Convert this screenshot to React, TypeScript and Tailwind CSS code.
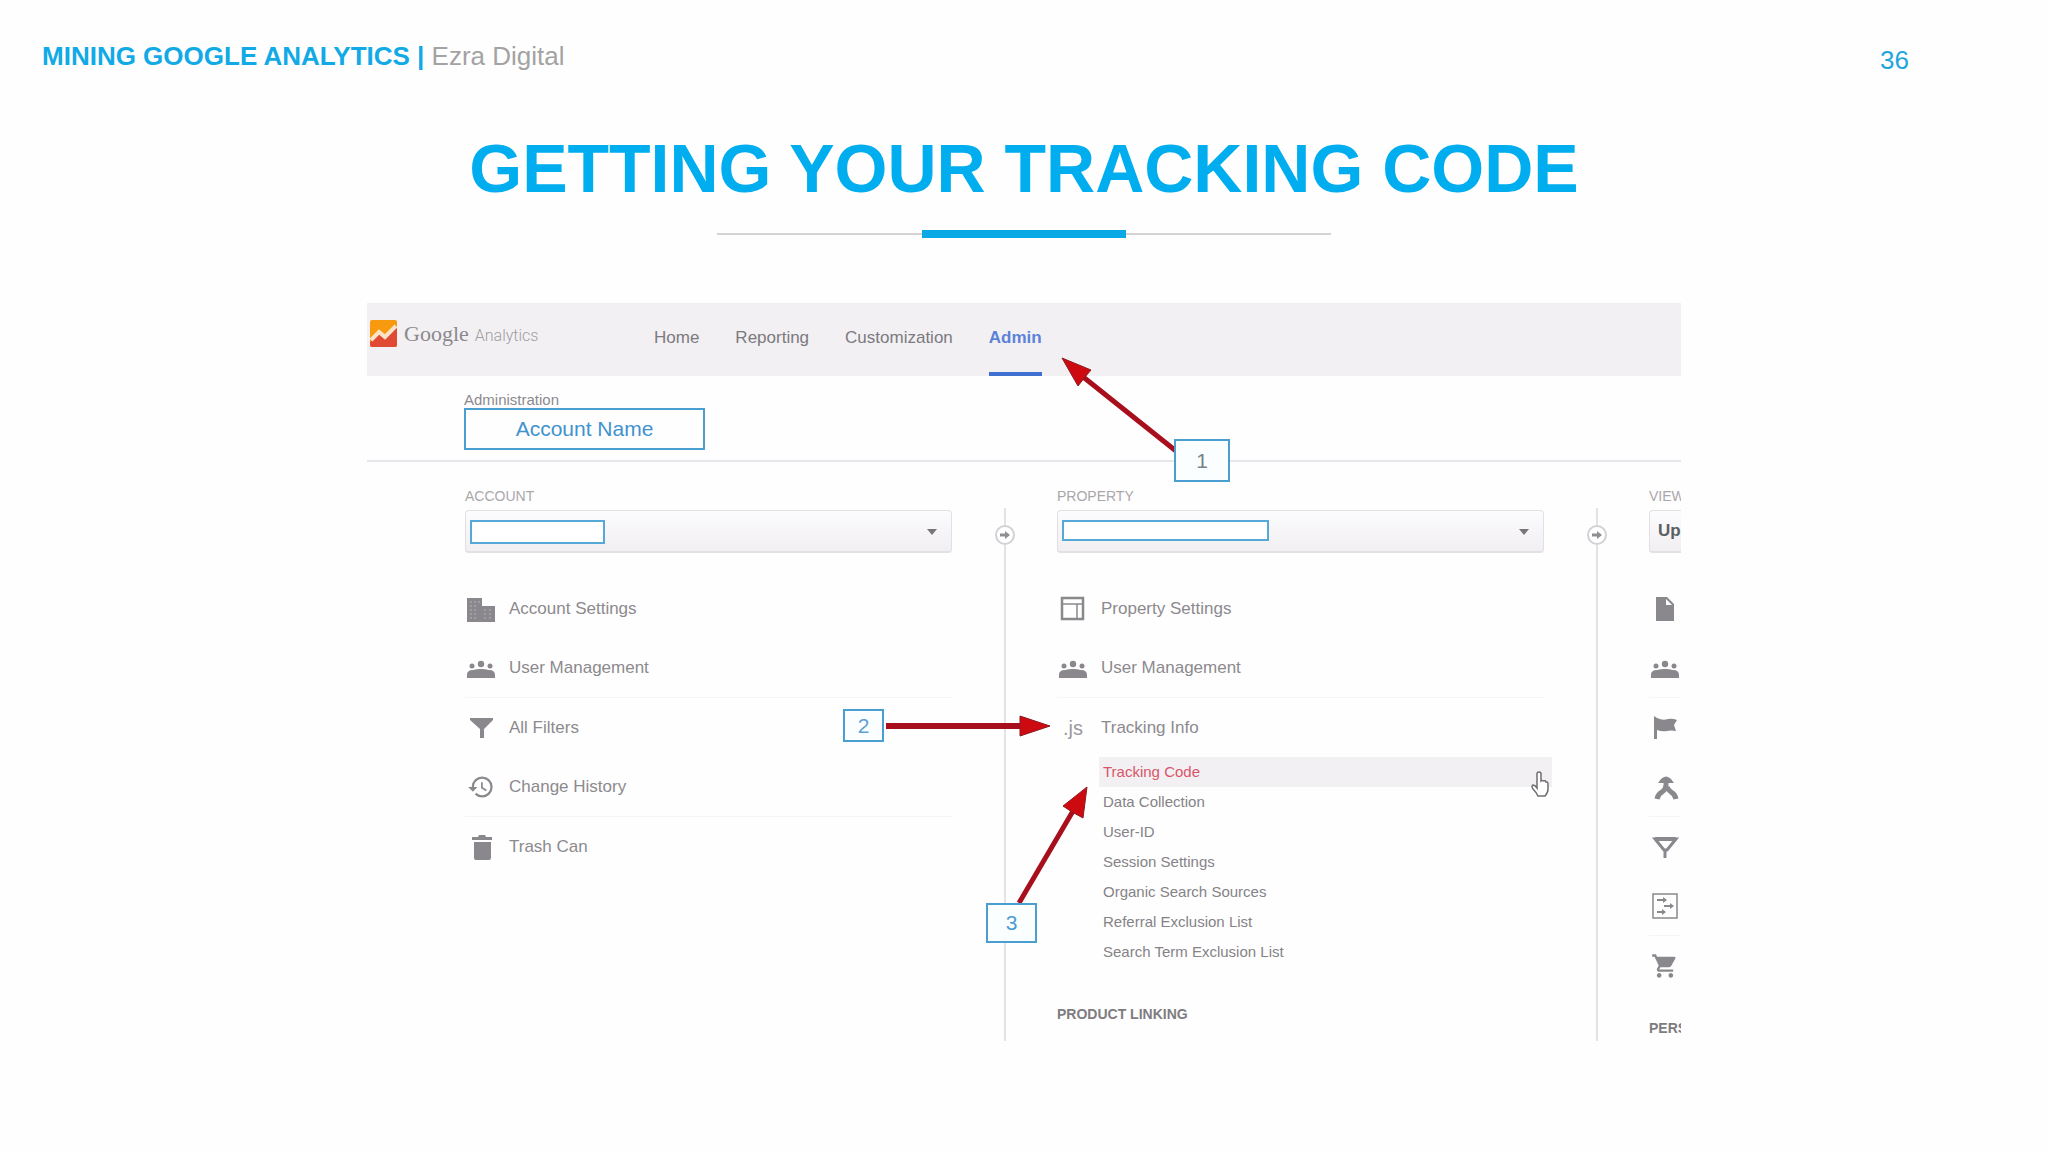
import type { ReactNode } from "react";
import { MdHistory, MdShoppingCart } from "react-icons/md";

interface Item { label: string; icon: ReactNode }

const icon = "size-7 shrink-0 text-[#8a888c]";

function BuildingIcon() {
  return (
    <svg viewBox="0 0 28 28" className={icon} aria-hidden="true">
      <path d="M0 3h15v8h13v16H0z" fill="currentColor" />
      <path d="M4 6v18M8 6v18M12 6v4M18 14v10M23 14v10" stroke="#b5b3b7" strokeWidth="1" strokeDasharray="2 2" />
    </svg>
  );
}

function UsersIcon() {
  return (
    <svg viewBox="0 0 28 28" className={icon} fill="currentColor" aria-hidden="true">
      <circle cx="5" cy="12" r="2.5" />
      <circle cx="14" cy="10" r="3.2" />
      <circle cx="23" cy="12" r="2.5" />
      <path d="M0 24v-3c0-4 3-5 6-5 2 0 2-1 8-1s6 1 8 1c3 0 6 1 6 5v3z" />
    </svg>
  );
}

function FilterIcon() {
  return (
    <svg viewBox="0 0 28 28" className={icon} fill="currentColor" aria-hidden="true">
      <path d="M3 4h23v2l-9 9v9h-4v-9L3 6z" />
    </svg>
  );
}

function TrashIcon() {
  return (
    <svg viewBox="0 0 28 28" className={icon} fill="currentColor" aria-hidden="true">
      <path d="M5 4h6l1-2h6l1 2h6v3H5zM7 9h17v16q0 2-2 2H9q-2 0-2-2z" />
    </svg>
  );
}

function LayoutIcon() {
  return (
    <svg viewBox="0 0 28 28" className={icon} fill="none" stroke="currentColor" aria-hidden="true">
      <rect x="3" y="3" width="21" height="21" strokeWidth="2.5" />
      <path d="M4 9h19M18 9v15" strokeWidth="1.5" />
    </svg>
  );
}

function PageIcon() {
  return (
    <svg viewBox="0 0 28 28" className={icon} aria-hidden="true">
      <path d="M5 2h11l7 7v17H5z" fill="currentColor" />
      <path d="M15 4v6h6z" fill="#fff" />
    </svg>
  );
}

function FlagIcon() {
  return (
    <svg viewBox="0 0 28 28" className={icon} fill="currentColor" aria-hidden="true">
      <path d="M3 2l3 2q6 3 11 1 4-1 9 1l-3 5 2 6q-5-1-9 0-5 1-10-1v9H3z" />
    </svg>
  );
}

function MergeIcon() {
  return (
    <svg viewBox="0 0 28 28" className={icon} fill="none" stroke="currentColor" aria-hidden="true">
      <path d="M15 8v4q0 4-4 7-4 2-5 7M16 14q1 3 4 5 4 2 5 7" strokeWidth="5" />
      <path d="M7 10l3-4q5-5 10 0l3 4z" fill="currentColor" stroke="none" />
    </svg>
  );
}

function FunnelIcon() {
  return (
    <svg viewBox="0 0 28 28" className={icon} fill="none" stroke="currentColor" aria-hidden="true">
      <path d="M4 6h21L16 17h-3L4 6zM14 16v9" strokeWidth="3" />
      <path d="M4 6h21" strokeWidth="4" />
    </svg>
  );
}

function ChannelsIcon() {
  return (
    <svg viewBox="0 0 28 28" className={icon} fill="none" stroke="currentColor" aria-hidden="true">
      <rect x="2" y="2" width="24" height="24" strokeWidth="1.5" />
      <path d="M6 8h9M13 14h9M6 20h7" strokeWidth="2" />
      <path d="M12 5l4 3-4 3zM19 11l4 3-4 3zM11 17l4 3-4 3z" fill="currentColor" stroke="none" />
    </svg>
  );
}

function ScriptIcon() {
  return <span className="w-7 shrink-0 text-center text-[20px] leading-6 text-[#9a989c]" aria-hidden="true">.js</span>;
}

const nav = ["Home", "Reporting", "Customization", "Admin"];

const accountItems: Item[] = [
  { label: "Account Settings", icon: <BuildingIcon /> },
  { label: "User Management", icon: <UsersIcon /> },
  { label: "All Filters", icon: <FilterIcon /> },
  { label: "Change History", icon: <MdHistory className={icon} aria-hidden="true" /> },
  { label: "Trash Can", icon: <TrashIcon /> },
];

const propertyItems: Item[] = [
  { label: "Property Settings", icon: <LayoutIcon /> },
  { label: "User Management", icon: <UsersIcon /> },
  { label: "Tracking Info", icon: <ScriptIcon /> },
];

const trackingItems = [
  "Tracking Code",
  "Data Collection",
  "User-ID",
  "Session Settings",
  "Organic Search Sources",
  "Referral Exclusion List",
  "Search Term Exclusion List",
];

const viewItems: Item[] = [
  { label: "View Settings", icon: <PageIcon /> },
  { label: "User Management", icon: <UsersIcon /> },
  { label: "Goals", icon: <FlagIcon /> },
  { label: "Content Grouping", icon: <MergeIcon /> },
  { label: "Filters", icon: <FunnelIcon /> },
  { label: "Channel Settings", icon: <ChannelsIcon /> },
  { label: "Ecommerce Settings", icon: <MdShoppingCart className={icon} aria-hidden="true" /> },
];

function Menu({ items, iconsOnly }: { items: Item[]; iconsOnly?: boolean }) {
  return (
    <ul className="mt-[26px]">
      {items.map((item) => (
        <li key={item.label} className="even:border-b even:border-[#f5f4f6]">
          <a href="#" aria-label={item.label} className="flex h-[59px] items-center gap-3.5 pl-0.5 whitespace-nowrap text-[17px] text-[#8c8a8e]">
            {item.icon}
            {!iconsOnly && item.label}
          </a>
        </li>
      ))}
    </ul>
  );
}

function Column({ id, title, value, mask, children }: { id: string; title: string; value?: string; mask?: string; children: ReactNode }) {
  return (
    <section className="w-[487px] shrink-0 pt-[26px]">
      <label htmlFor={id} className="block text-[14px] leading-4 text-[#a9a7ab]">{title}</label>
      <div className="relative mt-1.5">
        <select id={id} className="h-[43px] w-full appearance-none rounded-sm border border-b-2 border-[#e2e0e4] bg-linear-to-b from-[#fcfbfd] to-[#f1eff2] px-2 text-[17px] font-bold text-[#5c5f62]">
          <option>{value || ""}</option>
        </select>
        {mask && <div className={`absolute left-[5px] top-[10px] border-2 border-[#56a9d6] bg-white ${mask}`} />}
        <svg viewBox="0 0 12 6" className="pointer-events-none absolute right-[14px] top-[19px] h-1.5 w-3" aria-hidden="true">
          <path d="M1 0h10L6 6z" fill="#77757a" />
        </svg>
      </div>
      {children}
    </section>
  );
}

function Divider() {
  return (
    <div className="flex w-[105px] shrink-0 flex-col items-center pt-[46px]">
      <div className="h-[17px] w-0.5 bg-[#e4e2e6]" />
      <svg viewBox="0 0 20 20" className="size-5" aria-hidden="true">
        <circle cx="10" cy="10" r="9" fill="#fff" stroke="#d3d1d5" strokeWidth="2" />
        <path d="M5 8.500h5V6l5 4-5 4v-2.500H5z" fill="#8f8d91" />
      </svg>
      <div className="w-0.5 flex-1 bg-[#e4e2e6]" />
    </div>
  );
}

function Step({ n, className }: { n: number; className: string }) {
  return (
    <div className={`absolute flex items-center justify-center border-2 border-[#4a9fd0] bg-[#fbfeff] text-[21px] ${className}`}>{n}</div>
  );
}

function Arrows() {
  return (
    <svg viewBox="0 0 1314 738" className="pointer-events-none absolute left-0 top-0 h-[738px] w-[1314px]" aria-hidden="true">
      <g stroke="#a80f1c" strokeWidth="5">
        <path d="M809 148L715 73" />
        <path d="M519 423h136" strokeWidth="6" />
        <path d="M652 600L706 508" />
      </g>
      <g fill="#cc0a10" stroke="#8f1a20" strokeWidth="1">
        <path d="M695 55l29 12-6 7-7 9z" />
        <path d="M683 423l-30-10v20z" />
        <path d="M720 484l-24 19 9 6 11 6z" />
      </g>
    </svg>
  );
}

function AdminPanel() {
  return (
    <div className="relative mx-auto w-full max-w-[1314px] overflow-hidden">
      <header className="flex h-[73px] items-stretch bg-[#f2f0f3]">
        <a href="#" className="flex w-[287px] shrink-0 items-center gap-[7px] pb-3 pl-[3px]">
          <svg viewBox="0 0 27 27" className="size-[27px]" aria-hidden="true">
            <rect width="27" height="27" rx="2" fill="#f79a10" />
            <path d="M0 22l9-8 6 4L27 6v19q0 2-2 2H2q-2 0-2-2z" fill="#e04a32" />
            <path d="M1 20l8-8 6 5L26 6" fill="none" stroke="#fbe3c8" strokeWidth="4" />
          </svg>
          <span className="flex items-baseline gap-1.5 text-[#8b898d]">
            <span className="font-['Liberation_Serif',serif] text-[22px]">Google</span>
            <span className="font-[Roboto,sans-serif] text-[16px] font-light text-[#a09ea2]">Analytics</span>
          </span>
        </a>
        <nav className="flex gap-9 text-[17px] text-[#7c7a7e]">
          {nav.map((label) =>
            label === "Admin" ? (
              <a key={label} href="#" aria-current="page" className="flex items-center border-b-4 border-[#3f6fd0] pt-[5px] pb-1 font-bold text-[#5b82d8]">{label}</a>
            ) : (
              <a key={label} href="#" className="flex items-center border-b-4 border-transparent pt-[5px] pb-1">{label}</a>
            )
          )}
        </nav>
      </header>

      <div className="h-[86px] border-b-2 border-[#e8e6ea] pt-4 pl-[97px]">
        <p className="text-[15px] leading-4 text-[#8c8a8e]">Administration</p>
        <div className="flex h-[42px] w-[241px] items-center justify-center border-2 border-[#4a9fd0] text-[21px] text-[#3f93cf]">Account Name</div>
      </div>

      <div className="flex pl-[98px]">
        <Column id="account" title="ACCOUNT" mask="h-[24px] w-[135px]">
          <Menu items={accountItems} />
        </Column>
        <Divider />
        <Column id="property" title="PROPERTY" mask="h-[21px] w-[207px]">
          <Menu items={propertyItems} />
          <ul className="ml-[42px] -mr-2">
            {trackingItems.map((label, i) => (
              <li key={label}>
                <a href="#" className={`flex h-[30px] items-center pl-1 text-[15px] ${i === 0 ? "bg-[#f2f0f2] text-[#d9566a]" : "text-[#858387]"}`}>{label}</a>
              </li>
            ))}
          </ul>
          <h2 className="mt-[39px] text-[14px] leading-4 font-bold text-[#7e7c80]">PRODUCT LINKING</h2>
        </Column>
        <Divider />
        <Column id="view" title="VIEW" value="Up">
          <Menu items={viewItems} iconsOnly />
          <h2 className="mt-[25px] mb-[5px] text-[14px] leading-4 font-bold text-[#7e7c80]">PERS</h2>
        </Column>
      </div>

      <Arrows />
      <Step n={1} className="left-[807px] top-[136px] h-[43px] w-[56px] text-[#77828a]" />
      <Step n={2} className="left-[476px] top-[406px] h-[33px] w-[41px] text-[#5f9fd3]" />
      <Step n={3} className="left-[619px] top-[600px] h-[40px] w-[51px] text-[#4c9bcf]" />
      <svg viewBox="0 0 18 26" className="absolute left-[1164px] top-[468px] h-[26px] w-[18px]" aria-hidden="true">
        <path d="M6 14V3q0-2 2-2t2 2v7q1-1 2.500 0 2-1 2.500 1 2-.5 2 2v5q0 4-3 7H7q-2-4-5-7-2-3 0-4 2 0 4 3z" fill="#fff" stroke="#6f6d72" strokeWidth="1.500" />
      </svg>
    </div>
  );
}

export default function App() {
  return (
    <main className="min-h-screen bg-[#fefefe] pb-[111px] font-['Liberation_Sans',Arial,sans-serif]">
      <div className="flex items-end justify-between pt-10 pr-[139px] pl-[42px] text-[26px] leading-8">
        <p className="pb-1 text-[#a3a3a3]">
          <strong className="text-[#12aae6]">MINING GOOGLE ANALYTICS |</strong> Ezra Digital
        </p>
        <span className="text-[#22a5dd]">36</span>
      </div>
      <h1 className="mt-[52px] text-center text-[68px] leading-[80px] font-bold text-[#00aeef]">GETTING YOUR TRACKING CODE</h1>
      <div className="mx-auto mt-[22px] mb-[65px] flex w-[614px] items-center justify-center">
        <div className="h-0.5 flex-1 bg-[#d4d4d4]" />
        <div className="h-2 w-[204px] bg-[#09a9e6]" />
        <div className="h-0.5 flex-1 bg-[#d4d4d4]" />
      </div>
      <AdminPanel />
    </main>
  );
}
